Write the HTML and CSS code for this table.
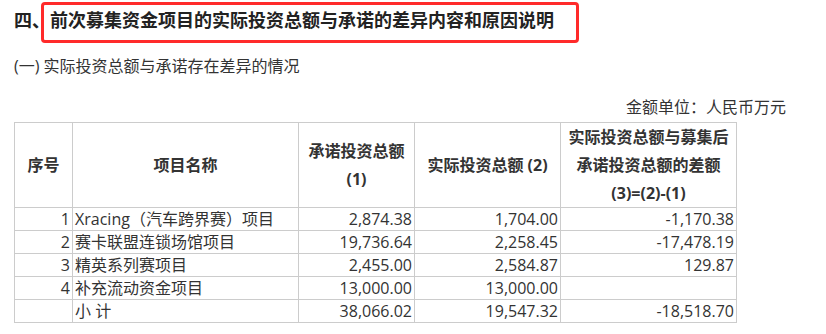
FILE: index.html
```html
<!DOCTYPE html>
<html lang="zh-CN">
<head>
<meta charset="utf-8">
<link rel="stylesheet" href="styles.css">
</head>
<body>
<div class="page">
  <h2 class="title">四、前次募集资金项目的实际投资总额与承诺的差异内容和原因说明<span class="mark"></span></h2>
  <p class="sub">(一) 实际投资总额与承诺存在差异的情况</p>
  <p class="unit">金额单位：人民币万元</p>
  <table class="grid">
    <colgroup>
      <col class="c1"><col class="c2"><col class="c3"><col class="c4"><col class="c5">
    </colgroup>
    <thead>
      <tr>
        <th>序号</th>
        <th>项目名称</th>
        <th>承诺投资总额<br>(1)</th>
        <th>实际投资总额 (2)</th>
        <th>实际投资总额与募集后<br>承诺投资总额的差额<br>(3)=(2)-(1)</th>
      </tr>
    </thead>
    <tbody>
      <tr><td class="r">1</td><td>Xracing（汽车跨界赛）项目</td><td class="r">2,874.38</td><td class="r">1,704.00</td><td class="r">-1,170.38</td></tr>
      <tr><td class="r">2</td><td>赛卡联盟连锁场馆项目</td><td class="r">19,736.64</td><td class="r">2,258.45</td><td class="r">-17,478.19</td></tr>
      <tr><td class="r">3</td><td>精英系列赛项目</td><td class="r">2,455.00</td><td class="r">2,584.87</td><td class="r">129.87</td></tr>
      <tr><td class="r">4</td><td>补充流动资金项目</td><td class="r">13,000.00</td><td class="r">13,000.00</td><td class="r"></td></tr>
      <tr><td class="r"></td><td>小 计</td><td class="r">38,066.02</td><td class="r">19,547.32</td><td class="r">-18,518.70</td></tr>
    </tbody>
  </table>
</div>
</body>
</html>
```
FILE: styles.css
```css
html, body {
  margin: 0;
  padding: 0;
  background: #fff;
}
body {
  font-family: "Open Sans", "Noto Sans CJK SC", sans-serif;
  color: #333;
}
.page {
  padding-left: 14px;
  width: 772px;
}
.title {
  position: relative;
  margin: 0;
  font-size: 18px;
  font-weight: bold;
  line-height: 40px;
  color: #222;
}
.mark {
  position: absolute;
  left: 27px;
  top: 2px;
  width: 532px;
  height: 35px;
  border: 3px solid #ff2a2a;
  border-radius: 4px;
}
.sub {
  margin: 14px 0 0;
  font-size: 16px;
  line-height: 24px;
}
.unit {
  margin: 17px 0 0;
  font-size: 16px;
  line-height: 24px;
  text-align: right;
}
.grid {
  margin-top: 3px;
  border-collapse: collapse;
  table-layout: fixed;
  width: 722px;
  font-size: 16px;
}
.c1 { width: 58px; }
.c2 { width: 226px; }
.c3 { width: 116px; }
.c4 { width: 146px; }
.c5 { width: 176px; }
.grid th, .grid td {
  border: 1px solid #ccc;
  padding: 0 2px;
  white-space: nowrap;
  overflow: hidden;
}
.grid th {
  font-weight: bold;
  line-height: 28px;
  text-align: center;
  vertical-align: middle;
  height: 84px;
}
.grid td {
  line-height: 22px;
  height: 22px;
  text-align: left;
}
.grid td.r {
  text-align: right;
}
```
